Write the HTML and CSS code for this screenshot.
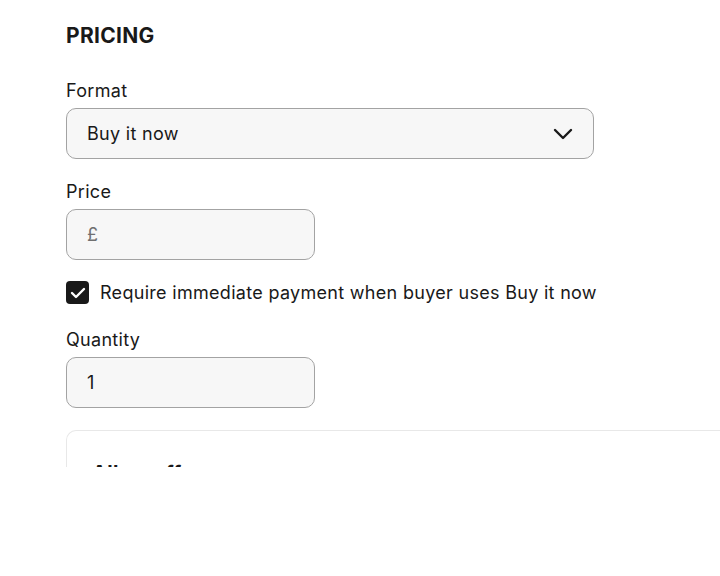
FILE: index.html
```html
<!DOCTYPE html>
<html lang="en">
<head>
    <meta charset="UTF-8">
    <title>Pricing</title>
    <link rel="stylesheet" href="styles.css">
</head>
<body>
    <div class="page">
        <section class="pricing">
            <h2>PRICING</h2>

            <div class="field">
                <label for="format">Format</label>
                <div class="select">
                    <span>Buy it now</span>
                    <svg class="chevron" width="20" height="12" viewBox="0 0 20 12">
                        <path d="M2 2 L10 10 L18 2" fill="none" stroke="#191919" stroke-width="2.4" stroke-linecap="round" stroke-linejoin="round"/>
                    </svg>
                </div>
            </div>

            <div class="field">
                <label for="price">Price</label>
                <div class="input short">
                    <span class="prefix">£</span>
                </div>
            </div>

            <label class="check">
                <span class="box">
                    <svg width="16" height="12" viewBox="0 0 16 12">
                        <path d="M2 6 L6 10 L14 2" fill="none" stroke="#fff" stroke-width="2.4" stroke-linecap="round" stroke-linejoin="round"/>
                    </svg>
                </span>
                Require immediate payment when buyer uses Buy it now
            </label>

            <div class="field">
                <label for="qty">Quantity</label>
                <div class="input short">
                    <span>1</span>
                </div>
            </div>

            <div class="card">
                <h3>Allow offers</h3>
            </div>
        </section>
    </div>
</body>
</html>
```

FILE: styles.css
```css
body {
    margin: 0;
    background: #fff;
    font-family: Inter, "Open Sans", sans-serif;
    color: #191919;
    letter-spacing: 0.3px;
}
.page {
    height: 467px;
    overflow: hidden;
}
.pricing {
    padding: 23px 0 0 66px;
}
h2 {
    margin: 0 0 32px;
    font-size: 21px;
    font-weight: 700;
}
.field {
    margin-bottom: 22px;
}
.field label {
    display: block;
    font-size: 18px;
    margin-bottom: 7px;
}
.select, .input {
    box-sizing: border-box;
    height: 51px;
    display: flex;
    align-items: center;
    padding: 0 20px;
    background: #f7f7f7;
    border: 1px solid #a3a3a3;
    border-radius: 10px;
    font-size: 18px;
}
.select {
    width: 528px;
    justify-content: space-between;
}
.input.short {
    width: 249px;
}
.prefix {
    color: #707070;
}
.check {
    display: flex;
    align-items: center;
    gap: 11px;
    font-size: 18px;
    margin: -1px 0 25px;
}
.box {
    width: 23px;
    height: 23px;
    border-radius: 4px;
    background: #191919;
    display: flex;
    align-items: center;
    justify-content: center;
}
.card {
    margin-top: 21px;
    border: 1px solid #e8e8e8;
    border-right: none;
    border-radius: 10px 0 0 10px;
    height: 200px;
    padding: 30px 25px;
}
h3 {
    margin: 0;
    font-size: 20px;
    font-weight: 700;
}
```
